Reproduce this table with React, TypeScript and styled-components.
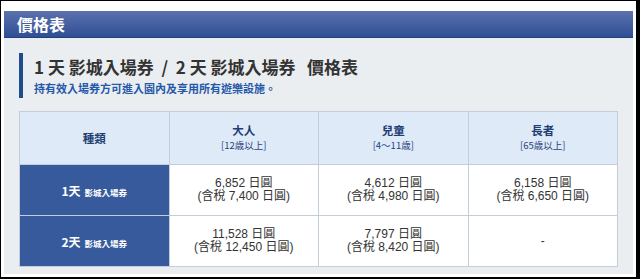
import React from "react";
import styled, { createGlobalStyle } from "styled-components";

const Global = createGlobalStyle`
  html, body { margin: 0; padding: 0; background: #fff; }
  body { font-family: "Liberation Sans", "Noto Sans CJK TC", sans-serif; }
`;

const Frame = styled.div`
  width: 640px;
  height: 279px;
  box-sizing: border-box;
  border-style: solid;
  border-color: #000;
  border-width: 1px 4px 2px 1px;
  background: #fff;
  padding: 10px 3px 3px 3px;
`;

const Panel = styled.section`
  height: 100%;
  box-sizing: border-box;
  background: #ebeef1;
  display: flex;
  flex-direction: column;
`;

const TitleBar = styled.h1`
  margin: 0;
  height: 29px;
  box-sizing: border-box;
  padding: 0 0 0 13px;
  display: flex;
  align-items: center;
  background: linear-gradient(#5b72ad, #2f4e94);
  border-bottom: 1px solid #243f7c;
  color: #fff;
  font-family: "Noto Sans CJK TC", sans-serif;
  font-size: 16px;
  font-weight: 700;
`;

const Body = styled.div`
  padding: 15px 15px 7px 15px;
  display: flex;
  flex-direction: column;
  gap: 13px;
`;

const Heading = styled.div`
  border-left: 4px solid #1f4b8f;
  padding: 1px 0 2px 11px;
  display: flex;
  flex-direction: column;
  gap: 1px;
`;

const HeadingTitle = styled.h2`
  margin: 0;
  font-family: "Noto Sans CJK TC", sans-serif;
  font-size: 17px;
  line-height: 25px;
  font-weight: 700;
  color: #333;
  white-space: pre;
`;

const HeadingNote = styled.p`
  margin: 0;
  font-family: "Noto Sans CJK TC", sans-serif;
  font-size: 11px;
  line-height: 16px;
  font-weight: 700;
  color: #2458a8;
`;

const Table = styled.table`
  width: 599px;
  border-collapse: collapse;
  table-layout: fixed;
`;

const HeadCell = styled.th`
  height: 52px;
  border: 1px solid #c3cedb;
  background-color: #dbe7f7;
  background-image: repeating-conic-gradient(#e3ecf9 0 25%, transparent 0 50%);
  background-size: 2px 2px;
  color: #213d72;
  text-align: center;
  vertical-align: middle;
  font-family: "Noto Sans CJK TC", sans-serif;
  font-weight: 700;
  font-size: 11.5px;
  line-height: 15px;
  padding: 0;
`;

const Sub = styled.span`
  display: block;
  font-size: 9.5px;
  font-weight: 400;
  line-height: 15px;
  color: #26427a;
`;

const RowHead = styled.th`
  height: 50px;
  border: 1px solid #c3cedb;
  background-color: #3f62a4;
  background-image: repeating-conic-gradient(#2e5193 0 25%, transparent 0 50%);
  background-size: 2px 2px;
  color: #fff;
  text-align: center;
  vertical-align: middle;
  font-family: "Noto Sans CJK TC", sans-serif;
  font-weight: 700;
  font-size: 12px;
  padding: 0;
`;

const Small = styled.span`
  font-size: 8.5px;
  margin-left: 4px;
`;

const Cell = styled.td`
  height: 50px;
  border: 1px solid #c3cedb;
  background: #fff;
  color: #333;
  text-align: center;
  vertical-align: middle;
  font-family: "Liberation Sans", "Noto Sans CJK TC", sans-serif;
  font-size: 12px;
  line-height: 13px;
  padding: 0;
`;

const cols = [
  { name: "大人", sub: "[12歳以上]" },
  { name: "兒童", sub: "[4〜11歳]" },
  { name: "長者", sub: "[65歳以上]" },
];

const rows = [
  {
    day: "1天",
    prices: [
      ["6,852 日圓", "(含稅 7,400 日圓)"],
      ["4,612 日圓", "(含稅 4,980 日圓)"],
      ["6,158 日圓", "(含稅 6,650 日圓)"],
    ],
  },
  {
    day: "2天",
    prices: [
      ["11,528 日圓", "(含稅 12,450 日圓)"],
      ["7,797 日圓", "(含稅 8,420 日圓)"],
      null,
    ],
  },
];

export default function App() {
  return (
    <>
      <Global />
      <Frame>
        <Panel>
          <TitleBar>價格表</TitleBar>
          <Body>
            <Heading>
              <HeadingTitle>{"1 天 影城入場券  /  2 天 影城入場券   價格表"}</HeadingTitle>
              <HeadingNote>持有效入場券方可進入園內及享用所有遊樂設施。</HeadingNote>
            </Heading>
            <Table>
              <thead>
                <tr>
                  <HeadCell>種類</HeadCell>
                  {cols.map((c) => (
                    <HeadCell key={c.name}>
                      {c.name}
                      <Sub>{c.sub}</Sub>
                    </HeadCell>
                  ))}
                </tr>
              </thead>
              <tbody>
                {rows.map((r) => (
                  <tr key={r.day}>
                    <RowHead>
                      {r.day}
                      <Small>影城入場券</Small>
                    </RowHead>
                    {r.prices.map((p, i) => (
                      <Cell key={i}>
                        {p ? (
                          <>
                            {p[0]}
                            <br />
                            {p[1]}
                          </>
                        ) : (
                          "-"
                        )}
                      </Cell>
                    ))}
                  </tr>
                ))}
              </tbody>
            </Table>
          </Body>
        </Panel>
      </Frame>
    </>
  );
}
